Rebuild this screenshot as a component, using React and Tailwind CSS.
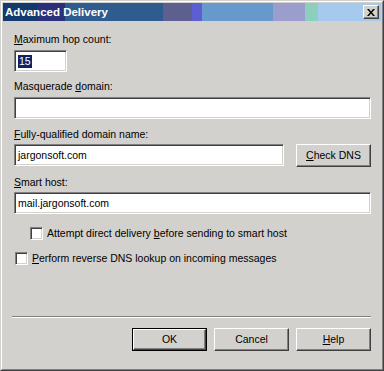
import React from "react";

const sunken =
  "border border-t-[#808080] border-l-[#808080] border-r-white border-b-white shadow-[inset_1px_1px_0_#404040,inset_-1px_-1px_0_#d3d1cd]";
const raised =
  "border border-t-white border-l-white border-r-[#404040] border-b-[#404040] shadow-[inset_-1px_-1px_0_#808080]";

function Btn({ children, def, className = "" }) {
  if (def) {
    return (
      <div className={"w-[75px] h-[23px] border border-black " + className}>
        <div className={"w-full h-full flex items-center justify-center " + raised}>{children}</div>
      </div>
    );
  }
  return (
    <div className={"w-[75px] h-[23px] flex items-center justify-center " + raised + " " + className}>
      {children}
    </div>
  );
}

function Check() {
  return <div className={"w-[13px] h-[13px] bg-white shrink-0 " + sunken} />;
}

function Input({ className = "", children }) {
  return (
    <div className={"h-[22px] bg-white flex items-center pl-[3px] " + sunken + " " + className}>
      {children}
    </div>
  );
}

export default function App() {
  return (
    <div
      className="w-[384px] h-[371px] bg-[#d3d1cd] border border-t-[#d3d1cd] border-l-[#d3d1cd] border-r-[#404040] border-b-[#404040] text-black"
      style={{ fontFamily: '"Liberation Sans", Arial, sans-serif' }}
    >
      <div className="w-full h-full border border-t-white border-l-white border-r-[#808080] border-b-[#808080] p-[1px] flex flex-col">
        {/* title bar */}
        <div className="h-[18px] flex items-center pl-[2px] pr-[2px] bg-[linear-gradient(to_right,#123a6c_0px,#123a6c_34px,#2a307c_34px,#2a307c_62px,#2f5c8f_62px,#2f5c8f_160px,#5d5f8f_160px,#5d5f8f_189px,#5c5ed2_189px,#5c5ed2_199px,#6899cd_199px,#6899cd_270px,#9b9dcd_270px,#9b9dcd_302px,#8dcfbd_302px,#8dcfbd_315px,#a6c9ee_315px)]">
          <span className="text-white font-bold text-[11.5px] leading-[14px]">Advanced Delivery</span>
          <div className={"ml-auto w-[16px] h-[14px] bg-[#d3d1cd] flex items-center justify-center " + raised}>
            <svg width="8" height="7" viewBox="0 0 8 7">
              <path d="M0 0h2l2 2.5L6 0h2L5 3.5 8 7H6L4 4.5 2 7H0l3-3.5z" fill="#000" />
            </svg>
          </div>
        </div>

        {/* content */}
        <div className="flex-1 flex flex-col pl-[11px] pr-[10px] pt-[12px] text-[10.5px] leading-[13px]">
          <div>
            <span className="underline">M</span>aximum hop count:
          </div>
          <Input className="mt-[4px] w-[53px]">
            <span className="bg-[#0a246a] text-white leading-[13px] px-[1px]">15</span>
          </Input>

          <div className="mt-[8px]">
            Masquerade <span className="underline">d</span>omain:
          </div>
          <Input className="mt-[4px]" />

          <div className="mt-[9px]">
            <span className="underline">F</span>ully-qualified domain name:
          </div>
          <div className="mt-[3px] flex items-start gap-[12px]">
            <Input className="flex-1">jargonsoft.com</Input>
            <Btn>
              <span>
                <span className="underline">C</span>heck DNS
              </span>
            </Btn>
          </div>

          <div className="mt-[9px]">
            <span className="underline">S</span>mart host:
          </div>
          <Input className="mt-[3px]">mail.jargonsoft.com</Input>

          <div className="mt-[13px] ml-[16px] flex items-center gap-[4px]">
            <Check />
            <span>
              Attempt direct delivery <span className="underline">b</span>efore sending to smart host
            </span>
          </div>
          <div className="mt-[12px] ml-[1px] flex items-center gap-[4px]">
            <Check />
            <span>
              <span className="underline">P</span>erform reverse DNS lookup on incoming messages
            </span>
          </div>

          <div className="mt-[51px] -ml-[2px] h-[2px] border-t border-t-[#808080] border-b border-b-white" />

          <div className="mt-[10px] flex justify-end gap-[7px]">
            <Btn def>OK</Btn>
            <Btn>Cancel</Btn>
            <Btn>
              <span>
                <span className="underline">H</span>elp
              </span>
            </Btn>
          </div>
        </div>
      </div>
    </div>
  );
}
